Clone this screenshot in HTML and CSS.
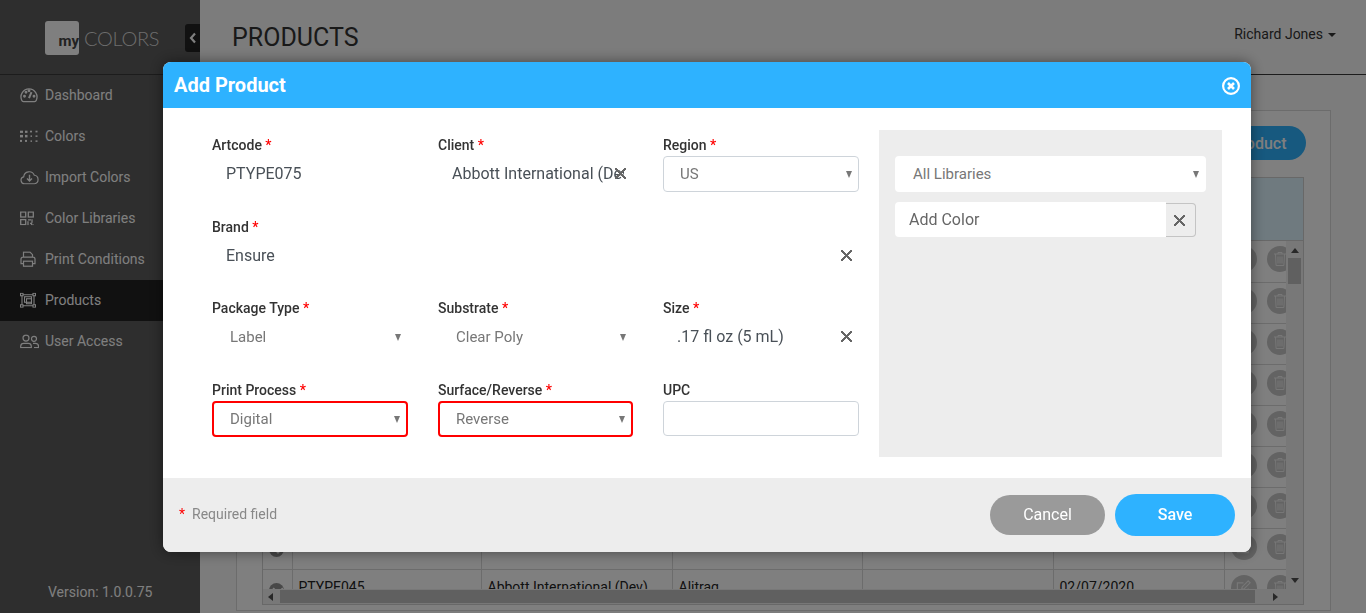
FILE: index.html
```html
<!DOCTYPE html>
<html lang="en">
<head>
  <meta charset="UTF-8" />
  <meta name="viewport" content="width=device-width, initial-scale=1.0"/>
  <title>myCOLORS - Products</title>
  <link rel="stylesheet" href="styles.css">
</head>
<body>

  <svg class="defs" width="0" height="0">
    <symbol id="trash" viewBox="0 0 14 16">
      <path d="M1 3h12M5 3V1.500h4V3M2.500 3l.6 11.500h7.800L11.500 3M5 5.500v7M7 5.500v7M9 5.500v7" fill="none" stroke="currentColor" stroke-width="1"/>
    </symbol>
    <symbol id="edit" viewBox="0 0 16 16">
      <path d="M13 9v5.500H1.500V3H8M6 10l.6-2.600L13 1l2 2-6.400 6.400z" fill="none" stroke="currentColor" stroke-width="1.300"/>
    </symbol>
  </svg>

  <div class="app">
    <aside class="sidebar">
      <div class="brand">
        <div class="logo-box"><span>my</span></div>
        <div class="logo-text">COLORS</div>
        <div class="collapse">
          <svg width="8" height="12" viewBox="0 0 8 12"><path d="M6 1.500 2 6l4 4.500" fill="none" stroke="currentColor" stroke-width="2.200"/></svg>
        </div>
      </div>
      <nav class="menu">
        <a class="menu-item">
          <svg width="18" height="16" viewBox="0 0 18 16" fill="none" stroke="currentColor" stroke-width="1.300"><path d="M3.500 14.500h11a2.500 2.500 0 0 0 1.800-1.500A8 8 0 1 0 1.700 13a2.500 2.500 0 0 0 1.800 1.500z"/><path d="M9 11l2.500-6" stroke-width="2"/><circle cx="4.500" cy="9" r=".8"/><circle cx="6" cy="5" r=".8"/><circle cx="9" cy="3.500" r=".8"/><circle cx="14" cy="9" r=".8"/></svg>
          Dashboard
        </a>
        <a class="menu-item">
          <svg width="19" height="12" viewBox="0 0 19 12" fill="currentColor"><rect x="0" y="0" width="3" height="2.500"/><rect x="5" y="0" width="2.500" height="2.500"/><rect x="10" y="0" width="2" height="2"/><rect x="15.500" y="0" width="2" height="2"/><rect x="0" y="4.500" width="3" height="2.500"/><rect x="5" y="4.500" width="2.500" height="2.500"/><rect x="10.500" y="5" width="1.500" height="1.500"/><rect x="15.500" y="5" width="2" height="1.500"/><rect x="0" y="9.500" width="2" height="2"/><rect x="5" y="9.500" width="2" height="2"/><rect x="10.500" y="10" width="1.500" height="1.500"/><rect x="15.500" y="10" width="2" height="1.500"/></svg>
          Colors
        </a>
        <a class="menu-item">
          <svg width="19" height="15" viewBox="0 0 19 15" fill="none" stroke="currentColor" stroke-width="1.200"><path d="M4.500 14a3.500 3.500 0 0 1-.8-6.900A5.500 5.500 0 0 1 14.300 5.500 4.300 4.300 0 0 1 14.500 14z"/><path d="M9.500 5v6M7 8.700l2.500 2.500L12 8.700" stroke-width="1.400"/></svg>
          Import Colors
        </a>
        <a class="menu-item">
          <svg width="14" height="14" viewBox="0 0 14 14" fill="none" stroke="currentColor" stroke-width="1.300"><rect x=".7" y=".7" width="5" height="5"/><rect x="8.300" y=".7" width="5" height="5"/><rect x=".7" y="8.300" width="5" height="5"/><path d="M8 8.500h3M12 8v3.500M8 10v4M10 12h1.500v2M13 13v1" /></svg>
          Color Libraries
        </a>
        <a class="menu-item">
          <svg width="16" height="16" viewBox="0 0 16 16" fill="none" stroke="currentColor" stroke-width="1.200"><path d="M3.500 6V1h6.500l2.500 2.500V6M3.500 12.500H1V8a2 2 0 0 1 2-2h10a2 2 0 0 1 2 2v4.500h-2.500"/><rect x="3.500" y="10" width="9" height="5"/></svg>
          Print Conditions
        </a>
        <a class="menu-item active">
          <svg width="16" height="15" viewBox="0 0 16 15" fill="none" stroke="currentColor" stroke-width="1.100"><path d="M2 2h12v11H2z"/><rect x="4.500" y="4" width="7" height="5.500"/><rect x="6.500" y="6" width="5" height="5"/><rect x=".5" y=".5" width="2.500" height="2.500" fill="#222"/><rect x="13" y=".5" width="2.500" height="2.500" fill="#222"/><rect x=".5" y="12" width="2.500" height="2.500" fill="#222"/><rect x="13" y="12" width="2.500" height="2.500" fill="#222"/></svg>
          Products
        </a>
        <a class="menu-item">
          <svg width="19" height="14" viewBox="0 0 19 14" fill="none" stroke="currentColor" stroke-width="1.200"><circle cx="6" cy="3.800" r="3"/><path d="M.7 13.400v-1.500A3 3 0 0 1 3.700 9h4.600a3 3 0 0 1 3 2.900v1.500z"/><circle cx="14" cy="4.500" r="2.500"/><path d="M13 9h2.500a3 3 0 0 1 3 3v1.400h-4.500"/></svg>
          User Access
        </a>
      </nav>
      <div class="version">Version: 1.0.0.75</div>
    </aside>

    <main class="main">
      <header class="topbar">
        <h1>PRODUCTS</h1>
        <div class="user">Richard Jones<span class="caret"></span></div>
      </header>

      <section class="panel">
        <div class="panel-actions">
          <button class="add-btn">Add Product</button>
        </div>
        <div class="table-wrap">
          <div class="table-head"></div>
          <div class="table-clip">
            <table class="products-table">
              <colgroup>
                <col class="c-toggle"><col class="c-art"><col class="c-client"><col class="c-brand"><col class="c-size"><col class="c-date"><col class="c-actions">
              </colgroup>
              <tbody>
                <tr><td><span class="dot"></span></td><td></td><td></td><td></td><td></td><td></td><td><div class="acts"><span class="act"><svg width="15" height="15"><use href="#edit"/></svg></span><span class="act"><svg width="14" height="16"><use href="#trash"/></svg></span></div></td></tr>
                <tr><td><span class="dot"></span></td><td></td><td></td><td></td><td></td><td></td><td><div class="acts"><span class="act"><svg width="15" height="15"><use href="#edit"/></svg></span><span class="act"><svg width="14" height="16"><use href="#trash"/></svg></span></div></td></tr>
                <tr><td><span class="dot"></span></td><td></td><td></td><td></td><td></td><td></td><td><div class="acts"><span class="act"><svg width="15" height="15"><use href="#edit"/></svg></span><span class="act"><svg width="14" height="16"><use href="#trash"/></svg></span></div></td></tr>
                <tr><td><span class="dot"></span></td><td></td><td></td><td></td><td></td><td></td><td><div class="acts"><span class="act"><svg width="15" height="15"><use href="#edit"/></svg></span><span class="act"><svg width="14" height="16"><use href="#trash"/></svg></span></div></td></tr>
                <tr><td><span class="dot"></span></td><td></td><td></td><td></td><td></td><td></td><td><div class="acts"><span class="act"><svg width="15" height="15"><use href="#edit"/></svg></span><span class="act"><svg width="14" height="16"><use href="#trash"/></svg></span></div></td></tr>
                <tr><td><span class="dot"></span></td><td></td><td></td><td></td><td></td><td></td><td><div class="acts"><span class="act"><svg width="15" height="15"><use href="#edit"/></svg></span><span class="act"><svg width="14" height="16"><use href="#trash"/></svg></span></div></td></tr>
                <tr><td><span class="dot"></span></td><td></td><td></td><td></td><td></td><td></td><td><div class="acts"><span class="act"><svg width="15" height="15"><use href="#edit"/></svg></span><span class="act"><svg width="14" height="16"><use href="#trash"/></svg></span></div></td></tr>
                <tr><td><span class="dot"></span></td><td></td><td></td><td></td><td></td><td></td><td><div class="acts"><span class="act"><svg width="15" height="15"><use href="#edit"/></svg></span><span class="act"><svg width="14" height="16"><use href="#trash"/></svg></span></div></td></tr>
                <tr><td><span class="dot"></span></td><td>PTYPE045</td><td>Abbott International (Dev)</td><td>Alitrag</td><td></td><td>02/07/2020</td><td><div class="acts"><span class="act"><svg width="15" height="15"><use href="#edit"/></svg></span><span class="act"><svg width="14" height="16"><use href="#trash"/></svg></span></div></td></tr>
              </tbody>
            </table>
          </div>
          <div class="vbar">
            <span class="arrow-up"></span>
            <span class="vthumb"></span>
            <span class="vspace"></span>
            <span class="arrow-down"></span>
          </div>
          <div class="hbar">
            <span class="arrow-left"></span>
            <span class="hthumb"></span>
            <span class="arrow-right"></span>
          </div>
          <div class="corner"></div>
        </div>
      </section>
    </main>
  </div>

  <div class="overlay">
    <div class="modal">
      <div class="modal-head">
        <h2>Add Product</h2>
        <svg class="modal-close" width="18" height="18" viewBox="0 0 18 18" fill="none" stroke="#fff"><circle cx="9" cy="9" r="7.900" stroke-width="2.200"/><path d="M6 6l6 6M12 6l-6 6" stroke-width="2.600"/></svg>
      </div>

      <div class="modal-body">
        <div class="form-grid">
          <div class="field">
            <label>Artcode <i>*</i></label>
            <div class="control"><span class="value">PTYPE075</span></div>
          </div>
          <div class="field">
            <label>Client <i>*</i></label>
            <div class="control"><span class="value clip">Abbott International (Dev)</span><span class="clear"></span></div>
          </div>
          <div class="field">
            <label>Region <i>*</i></label>
            <div class="control select boxed"><span class="value">US</span></div>
          </div>

          <div class="field wide">
            <label>Brand <i>*</i></label>
            <div class="control"><span class="value clip">Ensure</span><span class="clear"></span></div>
          </div>

          <div class="field">
            <label>Package Type <i>*</i></label>
            <div class="control select"><span class="value">Label</span></div>
          </div>
          <div class="field">
            <label>Substrate <i>*</i></label>
            <div class="control select"><span class="value">Clear Poly</span></div>
          </div>
          <div class="field">
            <label>Size <i>*</i></label>
            <div class="control"><span class="value clip">.17 fl oz (5 mL)</span><span class="clear"></span></div>
          </div>

          <div class="field">
            <label>Print Process <i>*</i></label>
            <div class="control select error"><span class="value">Digital</span></div>
          </div>
          <div class="field">
            <label>Surface/Reverse <i>*</i></label>
            <div class="control select error"><span class="value">Reverse</span></div>
          </div>
          <div class="field">
            <label>UPC</label>
            <div class="control boxed upc"></div>
          </div>
        </div>

        <div class="color-panel">
          <div class="control select lib"><span class="value">All Libraries</span></div>
          <div class="color-search">
            <div class="color-input">Add Color</div>
            <div class="color-clear"><span class="clear"></span></div>
          </div>
        </div>
      </div>

      <div class="modal-foot">
        <div class="required"><i>*</i>Required field</div>
        <button class="btn btn-cancel">Cancel</button>
        <button class="btn btn-save">Save</button>
      </div>
    </div>
  </div>

</body>
</html>
```

FILE: styles.css
```css
*{margin:0;padding:0;box-sizing:border-box}
html,body{height:100%;overflow:hidden}
body{font-family:"Roboto",sans-serif;font-size:14px;color:#333;background:#f8f8f8}
.defs{position:absolute}
button{font-family:inherit;border:none;cursor:pointer}

.app{display:flex;height:100vh}

/* sidebar */
.sidebar{width:200px;flex:none;background:#5c5c5c;display:flex;flex-direction:column;color:#fff}
.brand{height:75px;border-bottom:1px solid #383838;display:flex;align-items:center;padding-left:45px;padding-bottom:1px}
.logo-box{width:34px;height:34px;background:#fff;border-radius:3px;display:flex;align-items:flex-end;justify-content:flex-end;margin-top:2px}
.logo-box span{font-size:15px;font-weight:700;color:#444;line-height:15px;margin-bottom:6px}
.logo-text{font-family:"Lato",sans-serif;font-weight:300;font-size:20px;color:#d8d8d8;margin-left:5px;margin-top:2px;letter-spacing:-.3px}
.collapse{width:15px;height:28px;background:#222;border-radius:3px 0 0 3px;margin-left:auto;margin-top:2px;display:flex;align-items:center;justify-content:center;color:#fff}
.menu{display:flex;flex-direction:column}
.menu-item{height:41px;display:flex;align-items:center;padding:0 0 2px 45px;position:relative;color:#fff}
.menu-item svg{position:absolute;left:20px;top:50%;transform:translateY(-55%)}
.menu-item.active{background:#222}
.version{margin-top:auto;padding:0 0 13px 48px;line-height:16px}

/* page behind the modal */
.main{flex:1;display:flex;flex-direction:column;min-width:0}
.topbar{height:75px;flex:none;border-bottom:1px solid #383838;display:flex;justify-content:space-between;padding:0 30px 0 32px}
.topbar h1{font-size:25px;font-weight:400;line-height:30px;margin-top:23px;color:#333}
.user{margin-top:26px;line-height:16px;color:#333}
.caret{display:inline-block;border:4px solid transparent;border-top-color:#333;border-bottom:0;margin-left:5px;vertical-align:2px}
.panel{flex:none;height:501px;margin:35px 35px 0 36px;background:#fff;border:1px solid #d8d8d8;padding:15px 26px 5px 25px;display:flex;flex-direction:column}
.panel-actions{display:flex;justify-content:flex-end;margin-bottom:17px}
.add-btn{height:34px;width:128px;border-radius:17px;background:#2eb2ff;color:#fff;font-size:16px;font-weight:500;margin-right:-2px}
.table-wrap{flex:1;min-height:0;display:grid;grid-template-columns:1fr 17px;grid-template-rows:63px 1fr 15px;border:1px solid #d0d0d0}
.table-head{grid-column:1 / 3;background:#def4ff;border-bottom:1px solid #d0d0d0}
.table-clip{overflow:hidden;min-width:0;min-height:0}
.products-table{border-collapse:collapse;table-layout:fixed;width:1024px}
.c-toggle{width:29px}
.c-art{width:189px}
.c-client{width:191px}
.c-brand{width:190px}
.c-size{width:191px}
.c-date{width:171px}
.c-actions{width:63px}
.products-table td{height:41px;border:1px solid #d8d8d8;padding:9px 6px 0;vertical-align:top;white-space:nowrap;color:#222;font-size:14px;line-height:16px}
.products-table td:first-child{border-left:none;padding:6px 0 0 6px}
.products-table tr:first-child td{border-top:none}
.products-table td:last-child{padding:5px 0 0 6px;border-right:none}
.dot{display:block;width:15px;height:15px;border-radius:50%;background:#909090;margin-top:7px;position:relative}
.dot::after{content:"";position:absolute;left:4.500px;top:2.500px;width:6px;height:6px;border-right:2px solid #fff;border-bottom:2px solid #fff;transform:rotate(45deg)}
.acts{display:flex;gap:10px}
.act{flex:none;width:26px;height:26px;border-radius:50%;background:#c6c6c6;color:#eee;display:flex;align-items:center;justify-content:center}

.vbar{background:#f1f1f1;display:flex;flex-direction:column;align-items:center;padding-top:7px}
.vthumb{width:13px;height:26px;background:#c1c1c1;margin-top:5px}
.vspace{flex:1}
.arrow-up{border:4px solid transparent;border-bottom:5px solid #505050;border-top:0}
.arrow-down{border:4px solid transparent;border-top:5px solid #505050;border-bottom:0;margin-bottom:6px}
.hbar{background:#f1f1f1;display:flex;align-items:center;padding:0 5px}
.arrow-left{border:4px solid transparent;border-right:5px solid #505050;border-left:0}
.hthumb{width:975px;height:13px;background:#c1c1c1;margin:0 auto 0 7px}
.arrow-right{border:4px solid transparent;border-left:5px solid #505050;border-right:0;margin-right:3px}
.corner{background:#f1f1f1}

/* modal */
.overlay{position:fixed;inset:0;background:rgba(0,0,0,.5)}
.modal{width:1088px;height:490px;margin:62px 0 0 163px;background:#fff;border-radius:8px;box-shadow:0 0 14px rgba(0,0,0,.45);display:flex;flex-direction:column;overflow:hidden}
.modal-head{height:46px;flex:none;background:#2eb2ff;display:flex;align-items:center;justify-content:space-between;padding:0 11px 0 11px}
.modal-head h2{font-size:20px;font-weight:700;color:#fff}
.modal-close{margin-top:2px}
.modal-body{flex:1;display:flex;align-items:flex-start;padding:22px 29px 0 49px;gap:20px}
.form-grid{width:647px;margin-top:5px;display:grid;grid-template-columns:196px 195px 196px;column-gap:30px;row-gap:24.67px}
.field label{display:block;font-weight:500;line-height:20px;margin-bottom:1px;color:#333}
.field label i,.required i{font-style:normal;color:#f00}
.field.wide{grid-column:1 / 4}
.control{height:36px;display:flex;align-items:center;padding:0 7px 1px 14px;font-size:16px;color:#495057;position:relative}
.value{white-space:nowrap}
.value.clip{flex:1;min-width:0;overflow:hidden}
.clear{flex:none;width:11px;height:11px;margin-left:-9px;background:
  linear-gradient(45deg,transparent 43%,#666 43%,#666 57%,transparent 57%),
  linear-gradient(-45deg,transparent 43%,#666 43%,#666 57%,transparent 57%)}
.select{padding:0 8px 0 18px;color:#777;font-size:15px;border-radius:4px}
.select::after{content:"";position:absolute;right:7px;top:15px;border:3.500px solid transparent;border-top:7px solid #777;border-bottom:0}
.boxed{border:1px solid #ced4da;border-radius:4px}
.select.boxed{padding-left:16px}
.select.boxed::after{right:6px;top:14px}
.error{border:2px solid #f00;padding-left:16px}
.error::after{right:6px;top:13px}
.upc{height:35px}

.color-panel{width:343px;height:327px;flex:none;background:#ededed;padding:26px 16px 0}
.lib{background:#fff;height:36px}
.color-search{display:flex;margin-top:10px;height:35px}
.color-input{width:271px;background:#fff;border-radius:4px 0 0 4px;font-size:16px;color:#666;line-height:35px;padding-left:14px}
.color-clear{width:30px;margin-top:1px;border:1px solid #c4c4c4;border-left:none;border-radius:0 4px 4px 0;display:flex;align-items:center;justify-content:center;padding-right:3px}
.color-clear .clear{margin-left:0}

.modal-foot{height:74px;flex:none;background:#ededed;display:flex;align-items:center;padding:0 16px}
.required{color:#888;margin-right:auto;padding-bottom:2px}
.required i{margin-right:7px}
.btn{color:#fff;font-size:16px;font-weight:500;border-radius:21px;padding-bottom:2px}
.btn-cancel{width:115px;height:40px;background:#9a9a9a;font-weight:400}
.btn-save{width:120px;height:42px;background:#2eb2ff;margin-left:10px}
```
